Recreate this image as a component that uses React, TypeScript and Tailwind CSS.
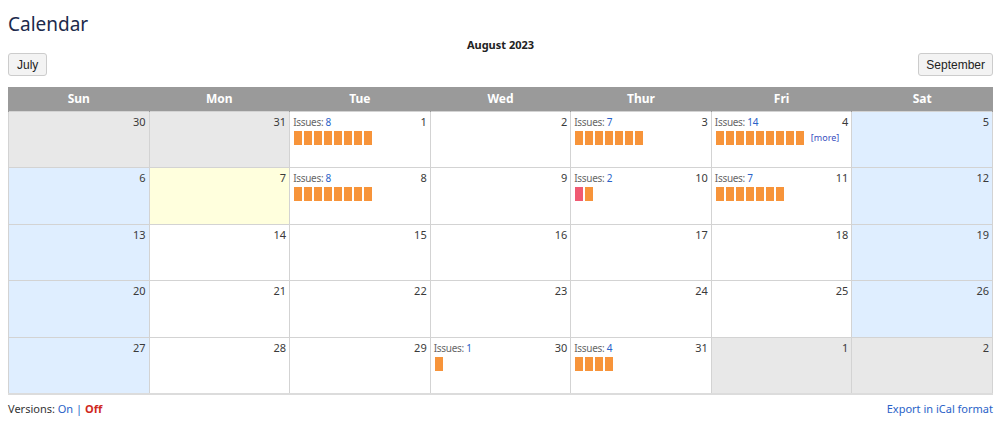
import React from "react";

type Cell = {
  day: number;
  kind: "other" | "weekend" | "today" | "normal";
  issues?: number;
  bars?: ("o" | "r")[];
  more?: boolean;
};

const o = (n: number): ("o" | "r")[] => Array.from({ length: n }, () => "o" as const);

const weeks: Cell[][] = [
  [
    { day: 30, kind: "other" },
    { day: 31, kind: "other" },
    { day: 1, kind: "normal", issues: 8, bars: o(8) },
    { day: 2, kind: "normal" },
    { day: 3, kind: "normal", issues: 7, bars: o(7) },
    { day: 4, kind: "normal", issues: 14, bars: o(9), more: true },
    { day: 5, kind: "weekend" },
  ],
  [
    { day: 6, kind: "weekend" },
    { day: 7, kind: "today" },
    { day: 8, kind: "normal", issues: 8, bars: o(8) },
    { day: 9, kind: "normal" },
    { day: 10, kind: "normal", issues: 2, bars: ["r", "o"] },
    { day: 11, kind: "normal", issues: 7, bars: o(7) },
    { day: 12, kind: "weekend" },
  ],
  [
    { day: 13, kind: "weekend" },
    { day: 14, kind: "normal" },
    { day: 15, kind: "normal" },
    { day: 16, kind: "normal" },
    { day: 17, kind: "normal" },
    { day: 18, kind: "normal" },
    { day: 19, kind: "weekend" },
  ],
  [
    { day: 20, kind: "weekend" },
    { day: 21, kind: "normal" },
    { day: 22, kind: "normal" },
    { day: 23, kind: "normal" },
    { day: 24, kind: "normal" },
    { day: 25, kind: "normal" },
    { day: 26, kind: "weekend" },
  ],
  [
    { day: 27, kind: "weekend" },
    { day: 28, kind: "normal" },
    { day: 29, kind: "normal" },
    { day: 30, kind: "normal", issues: 1, bars: o(1) },
    { day: 31, kind: "normal", issues: 4, bars: o(4) },
    { day: 1, kind: "other" },
    { day: 2, kind: "other" },
  ],
];

const bgFor: Record<Cell["kind"], string> = {
  other: "bg-[#e8e8e8]",
  weekend: "bg-[#dfeeff]",
  today: "bg-[#ffffdd]",
  normal: "bg-white",
};

const days = ["Sun", "Mon", "Tue", "Wed", "Thur", "Fri", "Sat"];

export default function App() {
  return (
    <div
      className="w-[999px] h-[431px] bg-white text-[#333] overflow-hidden"
      style={{ fontFamily: '"Noto Sans", "Open Sans", sans-serif' }}
    >
      <div className="pl-2 pr-[6px]">
        <h2 className="pt-[10px] text-[19px] leading-[28px] text-[#1c2a4c] font-normal">Calendar</h2>
        <div className="relative h-[49px]">
          <div className="absolute left-0 right-0 top-[-1px] text-center text-[11px] font-bold text-[#222]">
            August 2023
          </div>
          <div className="flex justify-between pt-[15px]">
            <button
              className="h-[23px] px-[8px] border border-[#cccccc] rounded-[3px] bg-[#f3f3f3] text-[12px] text-[#222]"
              style={{ fontFamily: '"Liberation Sans", Arial, sans-serif' }}
            >
              July
            </button>
            <button
              className="h-[23px] px-[7px] border border-[#cccccc] rounded-[3px] bg-[#f3f3f3] text-[12px] text-[#222]"
              style={{ fontFamily: '"Liberation Sans", Arial, sans-serif' }}
            >
              September
            </button>
          </div>
        </div>
        <table className="w-[985px] table-fixed border-collapse border-b-2 border-b-[#dcdcdc]">
          <thead>
            <tr>
              {days.map((d) => (
                <th
                  key={d}
                  className="h-[24px] bg-[#9a9a9a] text-white text-[12px] font-bold text-center border-x border-[#9a9a9a]"
                >
                  {d}
                </th>
              ))}
            </tr>
          </thead>
          <tbody>
            {weeks.map((w, wi) => (
              <tr key={wi}>
                {w.map((c, ci) => (
                  <td
                    key={ci}
                    className={`${bgFor[c.kind]} h-[56.6px] border border-[#d3d3d3] align-top px-[3px] pt-[3px] text-[10px] leading-[14px] tracking-[-0.3px]`}
                  >
                    <div className="flex justify-between">
                      <span className="text-[#666]">
                        {c.issues !== undefined && (
                          <>
                            Issues: <span className="text-[#2a62c8]">{c.issues}</span>
                          </>
                        )}
                      </span>
                      <span className="text-[#3a3a3a] text-[11px] tracking-normal">{c.day}</span>
                    </div>
                    {c.bars && (
                      <div className="flex items-center gap-[2px] mt-[2px] ml-px">
                        {c.bars.map((b, bi) => (
                          <span
                            key={bi}
                            className={`inline-block w-[8px] h-[14px] ${b === "r" ? "bg-[#f05a72]" : "bg-[#f7943a]"}`}
                          />
                        ))}
                        {c.more && (
                          <span className="ml-[5px] text-[9px] tracking-normal text-[#3a4fc0]">[more]</span>
                        )}
                      </div>
                    )}
                  </td>
                ))}
              </tr>
            ))}
          </tbody>
        </table>
        <div className="flex justify-between mt-[6px] text-[11px]">
          <span className="text-[#333]">
            Versions: <span className="text-[#2a62c8]">On</span> <span className="text-[#2a62c8]">|</span>{" "}
            <span className="text-[#d0281e] font-bold">Off</span>
          </span>
          <span className="text-[#2a62c8]">Export in iCal format</span>
        </div>
      </div>
    </div>
  );
}
